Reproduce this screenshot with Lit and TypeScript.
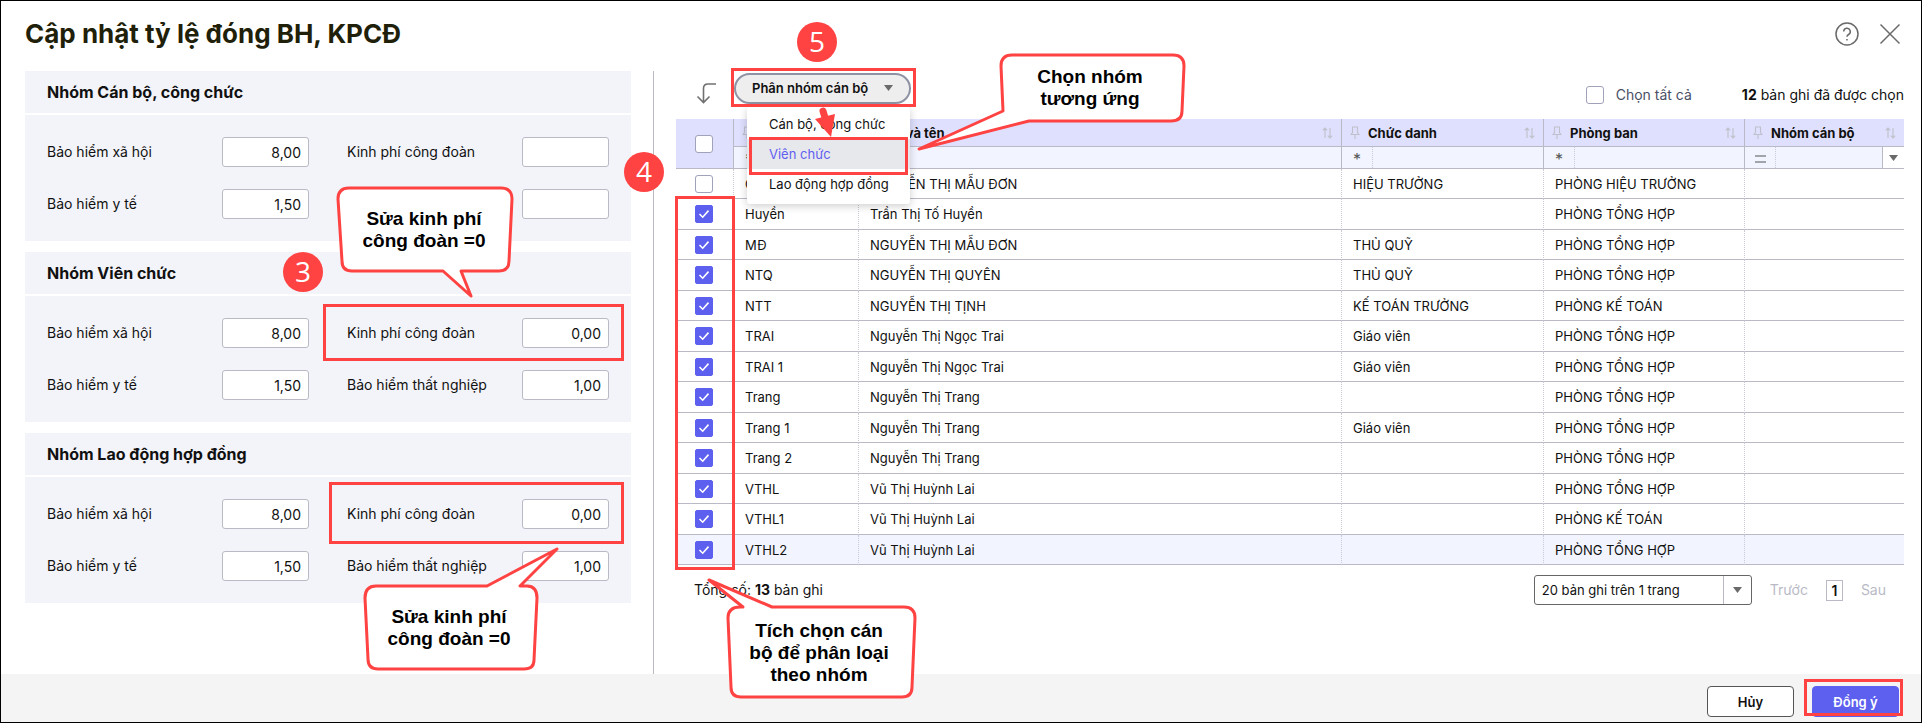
import { LitElement, html, svg, css } from "lit";
import { customElement } from "lit/decorators.js";

const groups = [
  { title: "Nhóm Cán bộ, công chức", fields: [["Bảo hiểm xã hội", "8,00"], ["Kinh phí công đoàn", ""], ["Bảo hiểm y tế", "1,50"], ["Bảo hiểm thất nghiệp", ""]] },
  { title: "Nhóm Viên chức", fields: [["Bảo hiểm xã hội", "8,00"], ["Kinh phí công đoàn", "0,00"], ["Bảo hiểm y tế", "1,50"], ["Bảo hiểm thất nghiệp", "1,00"]] },
  { title: "Nhóm Lao động hợp đồng", fields: [["Bảo hiểm xã hội", "8,00"], ["Kinh phí công đoàn", "0,00"], ["Bảo hiểm y tế", "1,50"], ["Bảo hiểm thất nghiệp", "1,00"]] },
];

const rows = [
  ["CTM", "NGUYỄN THỊ MẪU ĐƠN", "HIỆU TRƯỞNG", "PHÒNG HIỆU TRƯỞNG"],
  ["Huyền", "Trần Thị Tố Huyền", "", "PHÒNG TỔNG HỢP"],
  ["MĐ", "NGUYỄN THỊ MẪU ĐƠN", "THỦ QUỸ", "PHÒNG TỔNG HỢP"],
  ["NTQ", "NGUYỄN THỊ QUYÊN", "THỦ QUỸ", "PHÒNG TỔNG HỢP"],
  ["NTT", "NGUYỄN THỊ TỊNH", "KẾ TOÁN TRƯỞNG", "PHÒNG KẾ TOÁN"],
  ["TRAI", "Nguyễn Thị Ngọc Trai", "Giáo viên", "PHÒNG TỔNG HỢP"],
  ["TRAI 1", "Nguyễn Thị Ngọc Trai", "Giáo viên", "PHÒNG TỔNG HỢP"],
  ["Trang", "Nguyễn Thị Trang", "", "PHÒNG TỔNG HỢP"],
  ["Trang 1", "Nguyễn Thị Trang", "Giáo viên", "PHÒNG TỔNG HỢP"],
  ["Trang 2", "Nguyễn Thị Trang", "", "PHÒNG TỔNG HỢP"],
  ["VTHL", "Vũ Thị Huỳnh Lai", "", "PHÒNG TỔNG HỢP"],
  ["VTHL1", "Vũ Thị Huỳnh Lai", "", "PHÒNG KẾ TOÁN"],
  ["VTHL2", "Vũ Thị Huỳnh Lai", "", "PHÒNG TỔNG HỢP"],
];

const columns = [["Mã", "*"], ["Họ và tên", "*"], ["Chức danh", "*"], ["Phòng ban", "*"], ["Nhóm cán bộ", "="]];

const pin = html`<svg class="pin" width="10" height="13" viewBox="0 0 10 13" aria-hidden="true"><path d="M2 1h6M2.500 1v5.500L1 8.500h8L7.500 6.500V1M5 8.500V13" fill="none" stroke="#bfc0cb" stroke-width="1.100"/></svg>`;
const sort = html`<svg class="sort" width="11" height="12" viewBox="0 0 11 12" aria-hidden="true"><path d="M3 11V1M.8 3.400 3 1l2.200 2.400M8 1v10M5.800 8.600 8 11l2.200-2.400" fill="none" stroke="#bfc0cb" stroke-width="1.100"/></svg>`;
const caret = html`<svg class="caret" width="9" height="6" viewBox="0 0 9 6" aria-hidden="true"><path d="M0 0h9L4.500 6z" fill="#6a6a6a"/></svg>`;
const equals = html`<svg class="equals" width="11" height="8" viewBox="0 0 11 8" aria-hidden="true"><path d="M0 1h11M0 7h11" stroke="#555" stroke-width="1.200"/></svg>`;

@customElement("app-root")
export class AppRoot extends LitElement {
  static styles = css`
    :host { display: block; }
    * { box-sizing: border-box; }
    .dialog {
      position: relative; display: flex; flex-direction: column; min-height: 100vh;
      border: 1px solid #000; background: #fff; color: #111;
      font: 13px/20px Inter, "Noto Sans", sans-serif;
    }
    button, input, select { font: inherit; color: inherit; }
    .head { display: flex; justify-content: space-between; align-items: center; height: 70px; padding: 0 20px 4px 24px; }
    h1 { margin: 0; font-size: 26px; line-height: 32px; font-weight: 700; color: #1f1f0a; }
    .tools { display: flex; gap: 20px; }
    .icon-btn { display: flex; padding: 0; border: 0; background: none; }
    .main { flex: 1; display: flex; align-items: stretch; padding: 0 17px 0 24px; }
    .left { flex: 0 1 629px; display: flex; flex-direction: column; gap: 11px; padding-right: 22px; border-right: 1px solid #b9bac6; }
    .right { flex: 1; min-width: 0; padding-left: 22px; }
    .group { position: relative; display: flex; flex-direction: column; gap: 2px; }
    h2 { margin: 0; padding: 0 22px; font-size: 16px; line-height: 42px; font-weight: 700; background: #f3f4f9; }
    .fields { display: grid; grid-template-columns: 1fr 1fr; gap: 22px 38px; padding: 22px; background: #f3f4f9; }
    .field { position: relative; display: flex; justify-content: space-between; align-items: center; font-size: 14px; }
    .field input { width: 87px; height: 30px; padding: 0 7px; border: 1px solid #b9bac6; border-radius: 3px; background: #fff; text-align: right; }
    .bar { display: flex; align-items: center; height: 48px; padding: 0 0 14px 20px; }
    .back { margin-top: 10px; }
    .pill-wrap { position: relative; margin-left: 17px; z-index: 2; }
    .pill { display: flex; align-items: center; gap: 16px; height: 31px; padding: 0 16px; border: 2px solid #8f92a3; border-radius: 16px; background: #eee; font-weight: 600; white-space: nowrap; }
    .menu { position: absolute; left: 13px; top: 34px; width: 163px; margin: 0; padding: 2px 0 5px; list-style: none; background: #fff; border-radius: 3px; box-shadow: 0 2px 8px rgba(0, 0, 0, .2); }
    .menu button { display: block; width: 100%; height: 30px; padding: 0 22px; border: 0; background: none; text-align: left; white-space: nowrap; }
    .menu .active { background: #e7e8ec; color: #5f5ff0; }
    .bar-right { margin-left: auto; display: flex; align-items: center; gap: 50px; font-size: 14px; padding-top: 14px; }
    .all { display: flex; align-items: center; gap: 12px; color: #4b4f66; }
    .check { appearance: none; display: block; width: 18px; height: 18px; margin: 0; border: 1px solid #9fa2b8; border-radius: 3px; background: #fff; }
    .check:checked { border-color: #5d5fef; border-radius: 2px; background: #5d5fef url('data:image/svg+xml,<svg xmlns="http://www.w3.org/2000/svg" viewBox="0 0 16 16"><path d="M3.500 8l3.200 3.200L12.500 4.600" fill="none" stroke="white" stroke-width="1.600"/></svg>'); }
    table { width: 100%; table-layout: fixed; border-collapse: separate; border-spacing: 0; }
    .c-check { width: 58px; }
    .c-code { width: 125px; }
    .c-title { width: 202px; }
    .c-room { width: 201px; }
    .c-group { width: 159px; }
    th, td { padding: 0; text-align: left; border-bottom: 1px solid #b9bac6; border-right: 1px solid #b9bac6; }
    tr > :last-child { border-right: 0; }
    .top th:first-child { border-right: 1px solid #b9bac6; }
    th { background: #dfe0fd; font-weight: 700; }
    .th { display: flex; align-items: center; gap: 8px; height: 27px; padding: 0 8px; }
    .sort { margin-left: auto; }
    .filters td { background: #f2f5ff; }
    .filter { display: flex; height: 21px; }
    .op { width: 31px; border: 0; border-right: 1px dotted #c9cad4; padding: 2px 0 0; background: none; color: #555; font-size: 16px; line-height: 18px; }
    .equals { display: block; margin: 0 auto; }
    .filter input { flex: 1; min-width: 0; border: 0; background: none; padding: 0 8px; }
    .drop { display: flex; align-items: center; justify-content: center; width: 22px; padding: 0; border: 0; border-left: 1px solid #b9bac6; background: #fff; }
    tbody td { height: 30px; padding-left: 11px; border-right: 1px dotted #c9cad4; white-space: nowrap; }
    tbody tr:nth-child(even) td { height: 31px; }
    tbody tr:last-child td { background: #f2f5ff; }
    .pick { padding: 0 0 0 19px; }
    tbody .pick { padding-left: 19px; }
    .pager { display: flex; align-items: center; padding: 10px 18px 0; font-size: 14px; }
    .nav { margin-left: auto; display: flex; align-items: center; gap: 18px; }
    .size { position: relative; display: flex; width: 218px; }
    .size select { appearance: none; width: 100%; height: 30px; padding: 0 7px; border: 1px solid #666; border-radius: 3px; background: #fff; font-size: 13px; }
    .size .arrow { position: absolute; right: 1px; top: 1px; width: 28px; height: 28px; display: flex; align-items: center; justify-content: center; border-left: 1px solid #b9bac6; pointer-events: none; }
    .nav a { color: #b9bac6; text-decoration: none; }
    .nav .cur { width: 17px; height: 21px; border: 1px solid #b9bac6; color: #111; font-weight: 600; line-height: 19px; text-align: center; }
    .foot { display: flex; justify-content: flex-end; align-items: flex-start; gap: 18px; height: 48px; padding: 12px 22px 0 0; background: #f4f4f4; }
    .act { position: relative; }
    .foot button { display: block; width: 87px; height: 31px; border: 1px solid #555; border-radius: 4px; background: #fff; font-weight: 600; }
    .foot .ok { border-color: #5d5fef; background: #5d5fef; color: #fff; }
    .mark { position: absolute; border: 3px solid #ff4242; pointer-events: none; z-index: 3; }
    .m-fee { left: -24px; right: -15px; top: -14px; bottom: -13px; }
    .m-fee2 { left: -18px; right: -15px; top: -17px; bottom: -15px; }
    .m-pill { left: -3px; right: -5px; top: -5px; bottom: -3px; }
    .m-item { left: 2px; right: 2px; top: 30px; height: 38px; }
    .m-ok { left: -8px; right: -4px; top: -7px; bottom: 1px; }
    .m-rows { left: -1px; width: 60px; bottom: -5px; top: 77px; }
    .grid { position: relative; }
    .notes { position: absolute; left: -1px; top: -1px; width: 1px; height: 1px; overflow: visible; z-index: 4; pointer-events: none; }
    .shape { fill: #fff; stroke: #ff4242; stroke-width: 3; stroke-linejoin: round; }
    .say { font: bold 19px "Liberation Sans", Arial, sans-serif; text-anchor: middle; fill: #000; }
    .num { font: 500 28px "Open Sans", "Noto Sans", sans-serif; text-anchor: middle; fill: #fff; }
    .dot, .arrow-red { fill: #ff4242; }
    .stem { stroke: #ff4242; stroke-width: 7; stroke-linecap: round; }
  `;

  private say(x: number, y: number, lines: string[]) {
    return svg`<text class="say">${lines.map((t, i) => svg`<tspan x=${x} y=${y + i * 22}>${t}</tspan>`)}</text>`;
  }

  private step(x: number, y: number, n: number) {
    return svg`<circle class="dot" cx=${x} cy=${y} r="20"/><text class="num" x=${x} y=${y + 10}>${n}</text>`;
  }

  private group(g: (typeof groups)[number], gi: number) {
    return html`<section class="group">
      <h2>${g.title}</h2>
      <div class="fields">
        ${g.fields.map(([label, value], i) => html`<div class="field">
          <label for="f${gi}${i}">${label}</label><input id="f${gi}${i}" .value=${value} />
          ${i === 1 && gi > 0 ? html`<span class="mark ${gi === 1 ? "m-fee" : "m-fee2"}"></span>` : ""}
        </div>`)}
      </div>
    </section>`;
  }

  render() {
    return html`<div class="dialog">
      <header class="head">
        <h1>Cập nhật tỷ lệ đóng BH, KPCĐ</h1>
        <div class="tools">
          <button class="icon-btn" aria-label="Trợ giúp"><svg width="24" height="24" viewBox="0 0 24 24" fill="none" stroke="#6a6a6a" stroke-width="1.500"><circle cx="12" cy="12" r="11"/><path d="M8.700 9.600a3.300 3.300 0 1 1 4.900 2.900c-1 .6-1.600 1.100-1.600 2.300"/><path d="M12 17v1.500"/></svg></button>
          <button class="icon-btn" aria-label="Đóng"><svg width="22" height="24" viewBox="0 0 22 24" fill="none" stroke="#6a6a6a" stroke-width="1.500"><path d="M1.500 2.500l19 19M20.500 2.500l-19 19"/></svg></button>
        </div>
      </header>
      <main class="main">
        <div class="left">${groups.map((g, i) => this.group(g, i))}</div>
        <div class="right">
          <div class="bar">
            <svg class="back" width="21" height="22" viewBox="0 0 21 22" fill="none" stroke="#707070" stroke-width="1.600"><path d="M20 2h-8q-4.500 0-4.500 4.500V20M1.500 14.500l6 6 6-6"/></svg>
            <div class="pill-wrap">
              <button class="pill">Phân nhóm cán bộ ${caret}</button>
              <span class="mark m-pill"></span>
              <ul class="menu">
                <li><button>Cán bộ, công chức</button></li>
                <li><button class="active">Viên chức</button><span class="mark m-item"></span></li>
                <li><button>Lao động hợp đồng</button></li>
              </ul>
            </div>
            <div class="bar-right">
              <label class="all"><input class="check" type="checkbox" />Chọn tất cả</label>
              <span><b>12</b> bản ghi đã được chọn</span>
            </div>
          </div>
          <div class="grid">
            <table>
              <colgroup><col class="c-check" /><col class="c-code" /><col /><col class="c-title" /><col class="c-room" /><col class="c-group" /></colgroup>
              <thead>
                <tr class="top">
                  <th class="pick" rowspan="2"><input class="check" type="checkbox" aria-label="Chọn tất cả các dòng" /></th>
                  ${columns.map(([c]) => html`<th><div class="th">${pin}<span>${c}</span>${sort}</div></th>`)}
                </tr>
                <tr class="filters">
                  ${columns.map(([c, op]) => html`<td><div class="filter"><button class="op" aria-label="Kiểu lọc">${op === "=" ? equals : op}</button><input aria-label=${c} />${op === "=" ? html`<button class="drop" aria-label="Mở">${caret}</button>` : ""}</div></td>`)}
                </tr>
              </thead>
              <tbody>
                ${rows.map((r, i) => html`<tr>
                  <td class="pick"><input class="check" type="checkbox" aria-label=${r[1]} .checked=${i > 0} /></td>
                  ${r.map((c) => html`<td>${c}</td>`)}<td></td>
                </tr>`)}
              </tbody>
            </table>
            <span class="mark m-rows"></span>
          </div>
          <div class="pager">
            <span>Tổng số: <b>13</b> bản ghi</span>
            <div class="nav">
              <span class="size"><select aria-label="Số bản ghi trên trang"><option>20 bản ghi trên 1 trang</option></select><span class="arrow">${caret}</span></span>
              <a href="#">Trước</a><a class="cur" href="#">1</a><a href="#">Sau</a>
            </div>
          </div>
        </div>
      </main>
      <footer class="foot">
        <div class="act"><button>Hủy</button></div>
        <div class="act"><button class="ok">Đồng ý</button><span class="mark m-ok"></span></div>
      </footer>
      <svg class="notes">
        <path class="stem" d="M823 111l3 10"/><path class="arrow-red" d="M815 119l20-5-4 23z"/>
        <path class="shape" d="M349 188H501q11 0 11 11L509 261q0 10-10 10H461L471 296 443 271H352q-10 0-10-10L338 199q0-11 11-11z"/>
        <path class="shape" d="M376 586H487L557 549 520 586H527q10 0 10 12L534 660q0 9-10 9H378q-10 0-10-10L365 598q0-12 11-12z"/>
        <path class="shape" d="M1012 55H1173q11 0 11 11L1182 111q0 10-11 10H1029L919 149 1003 111 1001 66q0-11 11-11z"/>
        <path class="shape" d="M740 607H743L709 580 772 607H904q11 0 11 11L912 687q0 10-10 10H741q-10 0-10-10L728 618q0-11 12-11z"/>
        ${this.say(424, 225, ["Sửa kinh phí", "công đoàn =0"])}
        ${this.say(449, 623, ["Sửa kinh phí", "công đoàn =0"])}
        ${this.say(1090, 83, ["Chọn nhóm", "tương ứng"])}
        ${this.say(819, 637, ["Tích chọn cán", "bộ để phân loại", "theo nhóm"])}
        ${this.step(303, 272, 3)}${this.step(644, 172, 4)}${this.step(817, 42, 5)}
      </svg>
    </div>`;
  }
}
